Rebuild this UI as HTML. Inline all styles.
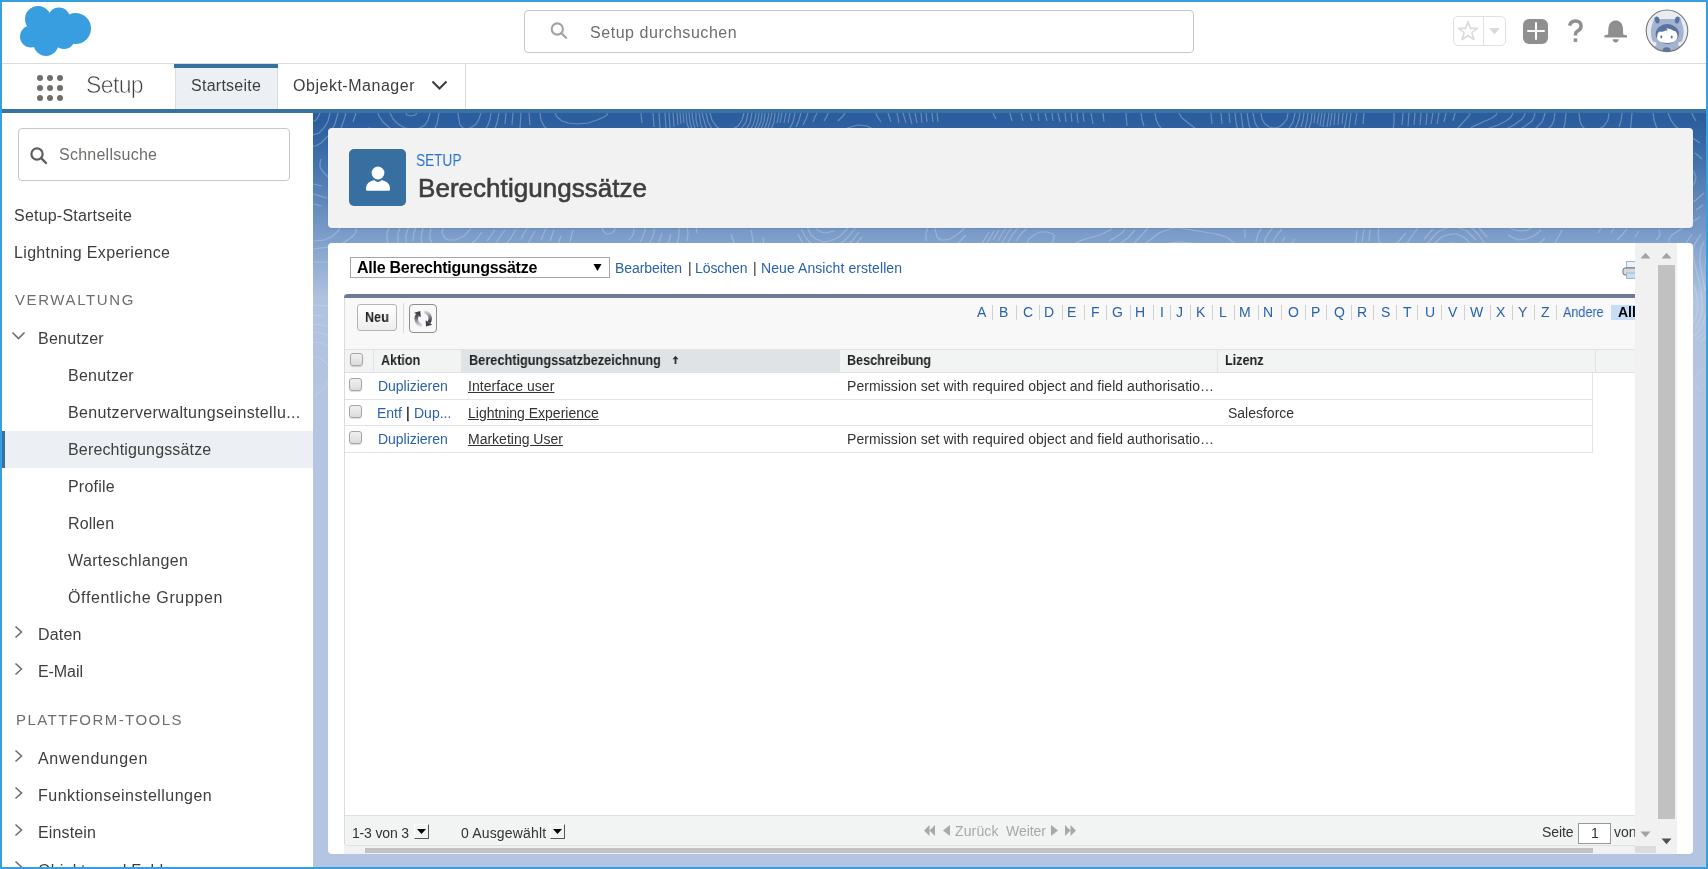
<!DOCTYPE html>
<html><head><meta charset="utf-8"><style>
html,body{margin:0;padding:0;}
body{width:1708px;height:869px;overflow:hidden;position:relative;background:#379fe0;font-family:"Liberation Sans",sans-serif;}
#pg{position:absolute;left:0;top:0;width:1708px;height:869px;overflow:hidden;}
#pg div, #pg svg{position:absolute;}
.t{white-space:nowrap;line-height:normal;will-change:transform;}
</style></head><body><div id="pg">
<div style="left:2px;top:2px;width:1704px;height:61px;background:#fff"></div>
<div style="left:2px;top:63px;width:1704px;height:1px;background:#dddbda"></div>
<svg style="position:absolute;left:19px;top:5px" width="75" height="53" viewBox="0 0 75 53">
<g fill="#389edf">
<circle cx="19" cy="14" r="13"/><circle cx="40" cy="13.5" r="11"/><circle cx="56.5" cy="23.5" r="15.5"/>
<circle cx="12" cy="31.5" r="11"/><circle cx="27" cy="38.5" r="12.5"/><circle cx="45" cy="33" r="11"/>
<rect x="14" y="16" width="44" height="22"/>
</g></svg>
<div style="left:524px;top:10px;width:668px;height:41px;border:1px solid #c9c7c5;border-radius:4px;background:#fff"></div>
<svg style="position:absolute;left:549px;top:21px" width="22" height="20" viewBox="0 0 22 20">
<circle cx="8.3" cy="8" r="5.6" fill="none" stroke="#a5a3a0" stroke-width="2.1"/>
<line x1="12.5" y1="12.2" x2="17" y2="16.7" stroke="#a5a3a0" stroke-width="2.3" stroke-linecap="round"/></svg>
<div class="t" style="left:590px;top:24px;font-size:16px;color:#706e6b;letter-spacing:0.55px;">Setup durchsuchen</div>
<div style="left:1453px;top:16px;width:51px;height:28px;border:1px solid #e1e1e1;border-radius:5px;background:#fff"></div>
<div style="left:1483px;top:17px;width:1px;height:28px;background:#e1e1e1"></div>
<svg style="position:absolute;left:1455px;top:19px" width="26" height="24" viewBox="0 0 26 24">
<path d="M13 2.6 L15.4 9.3 L22.4 9.4 L16.9 13.7 L18.9 20.5 L13 16.5 L7.1 20.5 L9.1 13.7 L3.6 9.4 L10.6 9.3 Z" fill="none" stroke="#dcdcdc" stroke-width="1.7" stroke-linejoin="round"/></svg>
<svg style="position:absolute;left:1488px;top:27px" width="13" height="9" viewBox="0 0 13 9"><path d="M1 1 H12 L6.5 7.5 Z" fill="#dadada"/></svg>
<div style="left:1523px;top:19px;width:25px;height:25px;background:#8f8f8f;border-radius:6px"></div>
<div style="left:1527px;top:30px;width:18px;height:2.4px;background:#fff;border-radius:1.2px"></div>
<div style="left:1534.8px;top:22px;width:2.4px;height:18px;background:#fff;border-radius:1.2px"></div>
<svg style="position:absolute;left:1566px;top:19px" width="20" height="26" viewBox="0 0 20 26">
<path d="M3.6 6.6 C4.3 3.6 6.6 1.9 9.5 1.9 C12.8 1.9 15.1 4.1 15.1 7.1 C15.1 10.1 13 11.5 11.2 12.3 C10 12.9 9.5 13.6 9.5 15 V16.6" fill="none" stroke="#8f8f8f" stroke-width="3.5"/>
<rect x="7.7" y="19.4" width="3.5" height="3.5" fill="#8f8f8f"/></svg>
<svg style="position:absolute;left:1603px;top:19px" width="26" height="26" viewBox="0 0 26 26">
<path d="M5.2 15.5 C5.2 10 5.3 5.5 8 3.3 C9.6 1.9 11.2 1.5 12.7 1.5 C14.2 1.5 15.8 1.9 17.4 3.3 C20.1 5.5 20.2 10 20.2 15.5 L23.5 16.2 C24.3 16.4 24.3 18.6 23.5 18.6 L1.9 18.6 C1.1 18.6 1.1 16.4 1.9 16.2 Z" fill="#8f8f8f"/>
<path d="M9.6 20.3 H15.8 C15.6 22.3 14.4 23.4 12.7 23.4 C11 23.4 9.8 22.3 9.6 20.3 Z" fill="#8f8f8f"/></svg>
<svg style="position:absolute;left:1645px;top:9px" width="44" height="44" viewBox="0 0 44 44">
<defs><clipPath id="av"><circle cx="22" cy="21.8" r="20.6"/></clipPath></defs>
<circle cx="22" cy="21.8" r="20.8" fill="#e8ecf1"/>
<g clip-path="url(#av)">
<path d="M9.5 8 C12 8.5 13.5 9.8 15 10 L29.5 10 C31 9.8 32.5 8.5 35 8 C36 11 36.5 13 37.5 16 C39 20 39 27 37 32 L34.5 35 L37 46 L7.5 46 L10 35 L7.5 32 C5.5 27 5.5 20 7 16 C8 13 8.5 11 9.5 8 Z" fill="#a3b3d0"/>
<path d="M2 30.8 L11.3 33.6 L11.3 36.9 L2 36.3 Z" fill="#e8ecf1"/>
<path d="M42.6 30.8 L33.3 33.6 L33.3 36.9 L42.6 36.3 Z" fill="#e8ecf1"/>
<ellipse cx="12.2" cy="11" rx="2.3" ry="3.5" fill="#5a73a0" transform="rotate(-12 12.2 11)"/>
<ellipse cx="32.2" cy="11" rx="2.3" ry="3.5" fill="#5a73a0" transform="rotate(12 32.2 11)"/>
<ellipse cx="22.3" cy="25" rx="11.6" ry="9.9" fill="#5a73a0"/>
<path d="M12.1 29 C12.1 26 12.8 24 14.2 22.6 C16 23.2 18.5 22.8 20.5 21.5 C21.3 21.6 22 21.8 22.6 21.5 C22.3 20.6 21.8 19.8 21 19.2 C24.5 19.6 27.5 20.8 29 22 L30.5 22.3 C31.6 23.5 32.3 25 32.5 27 C32.5 31.5 28.8 33.9 22.3 33.9 C15.8 33.9 12.1 32 12.1 29 Z" fill="#fff"/>
<ellipse cx="16.3" cy="27.8" rx="1" ry="1.6" fill="#5a73a0"/><ellipse cx="26.7" cy="28" rx="1" ry="1.6" fill="#5a73a0"/>
<ellipse cx="21.6" cy="42.3" rx="4.1" ry="4" fill="#5a73a0"/>
</g>
<circle cx="22" cy="21.8" r="20.8" fill="none" stroke="#777" stroke-width="1.1"/>
</svg>
<div style="left:2px;top:64px;width:1704px;height:45px;background:#fff"></div>
<div style="left:37px;top:75px;width:6px;height:6px;border-radius:50%;background:#706e6b"></div>
<div style="left:47px;top:75px;width:6px;height:6px;border-radius:50%;background:#706e6b"></div>
<div style="left:57px;top:75px;width:6px;height:6px;border-radius:50%;background:#706e6b"></div>
<div style="left:37px;top:85px;width:6px;height:6px;border-radius:50%;background:#706e6b"></div>
<div style="left:47px;top:85px;width:6px;height:6px;border-radius:50%;background:#706e6b"></div>
<div style="left:57px;top:85px;width:6px;height:6px;border-radius:50%;background:#706e6b"></div>
<div style="left:37px;top:95px;width:6px;height:6px;border-radius:50%;background:#706e6b"></div>
<div style="left:47px;top:95px;width:6px;height:6px;border-radius:50%;background:#706e6b"></div>
<div style="left:57px;top:95px;width:6px;height:6px;border-radius:50%;background:#706e6b"></div>
<div class="t" style="left:86px;top:72px;font-size:23px;color:#3e3e3c;letter-spacing:-0.61px;-webkit-text-stroke:0.6px #fff;">Setup</div>
<div style="left:174px;top:64px;width:104px;height:4px;background:#3372a0"></div>
<div style="left:175px;top:68px;width:103px;height:41px;background:#ecf0f4;border-left:1px solid #dddbda;border-right:1px solid #dddbda;box-sizing:border-box"></div>
<div class="t" style="left:191px;top:77px;font-size:16px;color:#3e3e3c;letter-spacing:0.26px;">Startseite</div>
<div class="t" style="left:293px;top:77px;font-size:16px;color:#3e3e3c;letter-spacing:0.52px;">Objekt-Manager</div>
<svg style="position:absolute;left:430px;top:79px" width="19" height="13" viewBox="0 0 19 13"><path d="M2.5 2.5 L9.5 9.5 L16.5 2.5" fill="none" stroke="#3e3e3c" stroke-width="2.1"/></svg>
<div style="left:465px;top:64px;width:1px;height:45px;background:#dddbda"></div>
<div style="left:2px;top:109px;width:1704px;height:4px;background:#3673a2"></div>
<div style="left:2px;top:113px;width:311px;height:754px;background:#fff"></div>
<div style="left:18px;top:128px;width:270px;height:51px;border:1px solid #c9c7c5;border-radius:4px;background:#fff"></div>
<svg style="position:absolute;left:28px;top:145px" width="22" height="22" viewBox="0 0 22 22">
<circle cx="9" cy="9" r="5.6" fill="none" stroke="#5f5e5c" stroke-width="2.2"/>
<line x1="13.2" y1="13.2" x2="18" y2="18" stroke="#5f5e5c" stroke-width="2.4" stroke-linecap="round"/></svg>
<div class="t" style="left:59px;top:146px;font-size:16px;color:#706e6b;letter-spacing:0.25px;">Schnellsuche</div>
<div class="t" style="left:14px;top:207px;font-size:16px;color:#3e3e3c;letter-spacing:0.21px;">Setup-Startseite</div>
<div class="t" style="left:14px;top:244px;font-size:16px;color:#3e3e3c;letter-spacing:0.34px;">Lightning Experience</div>
<div class="t" style="left:15px;top:291px;font-size:15px;color:#706e6b;letter-spacing:1.60px;">VERWALTUNG</div>
<svg style="position:absolute;left:11px;top:331px" width="16" height="10" viewBox="0 0 16 10"><path d="M1.5 1.5 L7.5 7.5 L13.5 1.5" fill="none" stroke="#706e6b" stroke-width="1.6"/></svg>
<div class="t" style="left:38px;top:330px;font-size:16px;color:#3e3e3c;letter-spacing:0.22px;">Benutzer</div>
<div style="left:2px;top:431px;width:311px;height:37px;background:#ecf0f4"></div>
<div style="left:2px;top:431px;width:3px;height:37px;background:#3670a0"></div>
<div class="t" style="left:68px;top:367px;font-size:16px;color:#3e3e3c;letter-spacing:0.22px;">Benutzer</div>
<div class="t" style="left:68px;top:404px;font-size:16px;color:#3e3e3c;letter-spacing:0.36px;">Benutzerverwaltungseinstellu...</div>
<div class="t" style="left:68px;top:441px;font-size:16px;color:#3e3e3c;letter-spacing:0.16px;">Berechtigungssätze</div>
<div class="t" style="left:68px;top:478px;font-size:16px;color:#3e3e3c;letter-spacing:0.20px;">Profile</div>
<div class="t" style="left:68px;top:515px;font-size:16px;color:#3e3e3c;letter-spacing:0.14px;">Rollen</div>
<div class="t" style="left:68px;top:552px;font-size:16px;color:#3e3e3c;letter-spacing:0.38px;">Warteschlangen</div>
<div class="t" style="left:68px;top:589px;font-size:16px;color:#3e3e3c;letter-spacing:0.64px;">Öffentliche Gruppen</div>
<svg style="position:absolute;left:14px;top:625px" width="10" height="14" viewBox="0 0 10 14"><path d="M1.5 1.5 L7.5 7 L1.5 12.5" fill="none" stroke="#706e6b" stroke-width="1.6"/></svg>
<div class="t" style="left:38px;top:626px;font-size:16px;color:#3e3e3c;letter-spacing:0.19px;">Daten</div>
<svg style="position:absolute;left:14px;top:662px" width="10" height="14" viewBox="0 0 10 14"><path d="M1.5 1.5 L7.5 7 L1.5 12.5" fill="none" stroke="#706e6b" stroke-width="1.6"/></svg>
<div class="t" style="left:38px;top:663px;font-size:16px;color:#3e3e3c;letter-spacing:-0.07px;">E-Mail</div>
<div class="t" style="left:16px;top:711px;font-size:15px;color:#706e6b;letter-spacing:1.44px;">PLATTFORM-TOOLS</div>
<svg style="position:absolute;left:14px;top:749px" width="10" height="14" viewBox="0 0 10 14"><path d="M1.5 1.5 L7.5 7 L1.5 12.5" fill="none" stroke="#706e6b" stroke-width="1.6"/></svg>
<div class="t" style="left:38px;top:750px;font-size:16px;color:#3e3e3c;letter-spacing:0.70px;">Anwendungen</div>
<svg style="position:absolute;left:14px;top:786px" width="10" height="14" viewBox="0 0 10 14"><path d="M1.5 1.5 L7.5 7 L1.5 12.5" fill="none" stroke="#706e6b" stroke-width="1.6"/></svg>
<div class="t" style="left:38px;top:787px;font-size:16px;color:#3e3e3c;letter-spacing:0.48px;">Funktionseinstellungen</div>
<svg style="position:absolute;left:14px;top:823px" width="10" height="14" viewBox="0 0 10 14"><path d="M1.5 1.5 L7.5 7 L1.5 12.5" fill="none" stroke="#706e6b" stroke-width="1.6"/></svg>
<div class="t" style="left:38px;top:824px;font-size:16px;color:#3e3e3c;letter-spacing:0.15px;">Einstein</div>
<svg style="position:absolute;left:14px;top:860px" width="10" height="14" viewBox="0 0 10 14"><path d="M1.5 1.5 L7.5 7 L1.5 12.5" fill="none" stroke="#706e6b" stroke-width="1.6"/></svg>
<div class="t" style="left:38px;top:862px;font-size:16px;color:#3e3e3c;letter-spacing:0.22px;">Objekte und Felder</div>
<div style="left:313px;top:113px;width:1393px;height:754px;background:linear-gradient(to bottom,#2c5e9f 0px,#2c5e9f 8px,#3568a5 30px,#4676ae 55px,#668cbf 95px,#7c9dca 123px,#96b0d6 155px,#afc2df 185px,#b3c5e1 275px,#b3c5e1 755px)"></div>
<svg style="position:absolute;left:313px;top:113px" width="1393" height="360" viewBox="0 0 1393 360">
<defs><linearGradient id="pf" x1="0" y1="0" x2="0" y2="360" gradientUnits="userSpaceOnUse"><stop offset="0" stop-color="#fff" stop-opacity="0.28"/><stop offset="0.45" stop-color="#fff" stop-opacity="0.22"/><stop offset="1" stop-color="#fff" stop-opacity="0"/></linearGradient></defs>
<path d="M397 0 L399 7 L403 13 L408 17 L414 18 L420 16 L425 13 L429 7 L431 0 M393 0 L395 9 L399 16 M428 16 L433 9 L435 0 M389 0 L392 11 L394 16 M431 19 L434 15 L437 10 L439 0 M386 0 L388 12 L391 18 M437 17 L440 12 L442 6 L443 0 M383 0 L383 7 L385 14 M440 19 L443 13 L445 7 L446 0 M379 0 L380 8 L382 15 M445 15 L448 8 L449 0 M376 0 L377 9 L379 17 M448 16 L451 8 L452 0 M683 6 L680 0 M373 0 L374 10 L377 19 M451 17 L454 9 L456 0 M699 8 L697 0 M370 0 L371 10 M454 18 L457 9 L459 0 M710 8 L708 0 M948 0 L949 6 L952 11 L956 14 L961 15 L966 14 L970 11 L974 6 L975 0 M1266 0 L1267 8 L1269 13 L1273 17 L1279 18 L1286 16 L1291 13 L1295 7 L1296 0 M367 0 L368 11 M457 19 L461 9 L462 0 M635 112 L638 113 M719 8 L717 0 M940 0 L942 10 L947 18 M975 17 L980 9 L982 0 M1253 0 L1252 10 L1250 18 M1306 14 L1308 8 L1309 0 M364 0 L365 12 M464 10 L466 0 M624 0 L625 9 M622 115 L623 120 L624 124 L627 127 L631 127 L637 126 L645 121 L654 113 M726 8 L725 0 M934 0 L936 12 L938 18 M981 18 L984 12 L986 6 L987 0 M1242 0 L1241 7 L1239 12 L1235 16 M1317 19 L1318 11 L1319 0 M360 0 L361 14 M467 10 L469 0 M619 0 L620 9 M615 112 L613 121 L613 128 M643 132 L653 122 M734 8 L732 0 M928 0 L929 8 L930 15 M988 14 L990 7 L991 0 M1232 0 L1231 4 L1229 9 L1225 13 L1222 16 M1379 74 L1382 69 L1383 64 L1381 59 L1377 54 M1392 357 L1389 359 M356 0 L357 15 M471 10 L473 0 M613 0 L614 9 M740 8 L739 0 M922 0 L923 9 L925 18 M992 16 L994 8 L995 0 M1222 0 L1221 4 L1219 8 L1211 14 L1201 19 M1378 90 L1383 87 L1391 80 M1389 46 L1382 40 M1346 19 L1343 13 L1341 7 L1340 0 M1386 343 L1379 344 M352 0 L353 16 M475 10 L477 0 M608 0 L609 10 M747 9 L745 0 M916 0 L917 10 M995 18 L998 9 L999 0 M1212 0 L1211 3 L1209 6 L1201 12 L1193 16 M1383 97 L1390 92 M1387 30 L1369 18 L1362 13 L1358 7 L1355 0 M142 127 L147 125 L151 123 L155 119 L158 115 M131 113 L129 119 L131 124 L133 126 L136 127 L142 127 M346 0 L347 15 M418 121 L421 130 M439 132 L440 127 L438 117 M475 19 L480 9 L482 0 M602 0 L604 10 M753 9 L752 0 M908 0 L909 11 M1001 10 L1002 0 M1200 0 L1198 4 L1193 8 L1185 12 L1168 18 M1346 116 L1347 122 L1346 124 L1343 127 M1377 205 L1379 200 L1380 189 L1377 177 M1356 130 L1356 126 L1359 122 L1387 104 M1383 8 L1380 3 L1379 0 M155 133 L163 127 L169 119 M118 115 L117 121 L117 126 L119 130 M340 0 L341 14 M451 133 L450 124 M483 14 L486 7 L488 0 M596 0 L599 11 M668 132 L676 119 M759 9 L758 0 M898 0 L899 11 M1004 11 L1006 0 M1184 0 L1183 2 L1179 5 L1161 13 L1153 18 M1195 114 L1202 117 L1208 118 L1215 117 L1223 112 M1326 118 L1322 124 M1379 212 L1383 204 L1385 194 L1384 183 L1381 172 M1372 134 L1375 127 L1379 121 M174 128 L182 117 M111 112 L109 119 L108 126 L110 133 M242 0 L244 4 L249 8 L255 10 L264 11 L275 10 L284 7 L291 4 L294 2 L294 0 M328 0 L329 10 M590 0 L593 10 M490 12 L493 6 L495 0 M903 133 L891 131 L864 129 L856 130 L849 132 M674 130 L681 118 M765 10 L764 0 M866 0 L867 2 L869 5 L883 16 M1007 13 L1009 0 M1157 0 L1156 3 L1144 16 M1195 122 L1201 125 L1206 127 L1213 126 L1221 123 L1228 117 M1314 115 L1310 121 L1304 127 M1382 216 L1386 209 L1389 199 L1389 188 L1388 176 L1381 148 L1380 140 L1381 133 L1384 127 L1388 121 M182 131 L192 117 M104 112 L101 120 L100 128 M227 0 L228 7 L231 13 L235 17 M383 113 L384 120 M584 0 L586 10 M500 9 L502 4 L504 0 M924 133 L920 129 L915 125 L910 123 L903 121 L866 115 L860 115 L854 117 L846 120 L828 134 M680 127 L686 117 M771 9 L770 0 M842 0 L843 6 L845 11 L848 15 M1010 14 L1012 0 M1142 0 L1140 8 M1066 113 L1065 121 L1066 128 L1069 132 L1072 133 L1076 133 L1080 132 L1085 129 L1093 120 M1226 131 L1232 125 M1302 113 L1298 120 M191 134 L198 125 L203 116 M96 113 L93 122 L93 127 L94 132 M1380 224 L1386 218 L1390 211 L1393 201 M1392 178 L1387 150 L1387 142 L1388 135 L1391 129 M3 360 L0 359 M0 8 L2 8 L4 6 L6 2 L7 0 M216 0 L217 12 M374 113 L375 120 L374 128 M575 0 L578 9 M511 8 L514 3 L515 0 M828 0 L829 7 L831 13 M835 115 L828 123 L821 130 M685 128 L690 119 L695 112 M780 11 L778 0 M932 125 L932 120 L932 116 M1014 14 L1016 0 M1133 0 L1131 9 M1057 117 L1056 128 M1092 133 L1107 112 M1241 132 L1249 117 M1289 114 L1285 120 M208 126 L214 115 M87 115 L85 120 L85 125 L85 130 M1383 227 L1389 221 M1393 152 L1393 144 M0 128 L11 127 L20 123 L25 118 L27 115 L27 112 M9 93 L0 91 M0 284 L2 283 L6 280 L12 274 L16 267 L17 261 L16 255 L12 249 L7 245 L0 243 M15 352 L11 344 L4 326 L2 323 L0 321 M0 22 L6 20 L11 15 L15 8 L17 0 M208 0 L207 15 M78 112 L75 117 L74 121 L74 126 L75 131 M213 134 L222 118 M366 112 L366 123 L363 134 M563 0 L564 3 L568 9 M525 8 L530 3 L532 0 M813 0 L814 13 M822 117 L815 125 L806 131 M689 130 L694 121 L700 113 M791 9 L790 0 M943 129 L945 121 L949 114 M1017 13 L1019 0 M1126 0 L1124 11 M1051 116 L1049 129 M1166 115 L1174 124 M0 136 L16 134 L30 130 L36 126 L40 123 L43 119 L43 115 M14 85 L7 83 L0 81 M1392 305 L1380 301 M1388 229 L1393 223 M17 234 L9 230 L0 229 M0 33 L3 33 L8 30 L16 22 L22 11 L25 0 M93 0 L94 2 L98 3 L102 2 L104 0 M200 0 L199 12 M9 73 L0 71 M951 134 L952 126 L957 118 L962 112 M1021 12 L1022 0 M1120 0 L1118 11 M1044 118 L1042 134 M1111 126 L1120 116 M1155 112 L1160 116 L1165 121 L1172 131 M534 15 L545 12 L554 13 L562 17 M228 127 L233 115 M358 121 L355 131 M694 132 L699 122 L706 114 M812 116 L809 120 L803 124 L796 128 M51 134 L57 134 M17 223 L9 220 L0 219 M193 0 L192 11 M16 65 L10 59 L7 54 L7 50 L8 46 M28 15 L31 7 L33 0 M77 0 L80 6 L85 11 L92 15 L100 16 L107 15 L112 12 L115 7 L117 0 M960 129 L964 122 L969 116 M1025 12 L1026 0 M1114 0 L1113 12 M1115 130 L1120 124 L1125 119 L1131 116 L1137 114 L1143 114 L1149 116 L1154 118 L1158 122 L1163 127 M549 124 L542 132 M237 128 L241 117 M349 120 L346 129 M703 128 L708 121 L714 115 M802 112 L797 117 L787 122 L769 127 L761 131 M1383 292 L1378 289 M0 149 L16 149 M18 214 L9 212 L0 211 M186 0 L184 10 L181 18 M40 9 L43 0 M65 0 L66 3 L70 9 L79 17 M120 19 L124 11 L126 0 M1108 0 L1107 12 M969 129 L972 124 M1029 11 L1030 0 M490 131 L485 121 M546 119 L539 128 L533 133 M244 134 L248 123 M341 113 L341 120 L339 125 L336 131 M1388 287 L1379 283 M713 132 L716 126 L721 122 L727 119 L734 119 L740 121 L741 123 L741 125 L739 130 M1119 134 L1124 128 L1129 124 L1134 122 L1139 121 L1144 121 L1148 123 L1152 125 L1156 129 L1159 134 M10 203 L0 202 M178 0 L177 6 L175 12 L172 17 M1102 0 L1101 12 M979 130 L982 126 M1031 17 L1033 8 L1034 0 M47 18 L51 16 L56 15 L62 16 M499 132 L493 125 L488 116 M543 114 L536 123 L531 128 L525 132 M257 129 L260 117 M332 112 L332 118 L330 123 L327 129 M1388 278 L1384 275 L1382 271 L1382 266 L1385 261 L1391 256 M1133 131 L1137 130 L1140 130 L1145 131 M18 193 L0 192 M168 0 L166 6 L163 11 L159 14 L154 16 L150 15 L147 12 L146 7 L145 0 M1096 0 L1095 13 M1036 15 L1038 0 M517 128 L510 129 L503 126 L498 122 L494 114 M535 115 L526 124 L522 126 L517 128 M321 112 L321 117 L320 122 L316 127 M1090 0 L1089 12 M1042 12 L1044 0 M513 120 L508 119 L503 116 M521 118 L517 119 L513 120 M296 121 L294 121 L292 120 L290 118 L289 115 L290 112 M303 114 L301 118 L299 120 L296 121 M1081 0 L1081 10 L1080 18 M1050 11 L1051 0" fill="none" stroke="url(#pf)" stroke-width="1.2"/></svg>
<div style="left:328px;top:128px;width:1365px;height:100px;background:#f2f2f2;border-radius:4px;box-shadow:0 1px 2px rgba(0,0,0,0.10)"></div>
<div style="left:349px;top:149px;width:57px;height:57px;background:#376fa0;border-radius:5px"></div>
<svg style="position:absolute;left:360px;top:160px" width="36" height="36" viewBox="0 0 36 36">
<circle cx="18" cy="13" r="6.4" fill="#fff"/>
<path d="M6 29 C6 25 7.5 22.8 11 21.2 C12.6 20.5 13.5 20.2 14.3 20 C15.3 21.3 16.6 22 18 22 C19.4 22 20.7 21.3 21.7 20 C22.5 20.2 23.4 20.5 25 21.2 C28.5 22.8 30 25 30 29 C30 30.3 29.6 30.8 28.5 30.8 H7.5 C6.4 30.8 6 30.3 6 29 Z" fill="#fff"/></svg>
<div class="t" style="left:416px;top:152px;font-size:16px;color:#2a73d0;transform:scaleX(0.8527);transform-origin:0 0;">SETUP</div>
<div class="t" style="left:418px;top:173px;font-size:26px;color:#3e3e3c;letter-spacing:0.04px;-webkit-text-stroke:0.6px #3e3e3c;">Berechtigungssätze</div>
<div style="left:328px;top:243px;width:1365px;height:611px;background:#fff;border-radius:4px"></div>
<div style="left:350px;top:257px;width:258px;height:19px;border:1px solid #a6a6a6;background:#fff"></div>
<div class="t" style="left:357px;top:259px;font-size:16px;color:#000;font-weight:bold;letter-spacing:-0.25px;">Alle Berechtigungssätze</div>
<svg style="position:absolute;left:593px;top:263px" width="9" height="9" viewBox="0 0 9 9"><path d="M0.5 1 H8.5 L4.5 8 Z" fill="#000"/></svg>
<div class="t" style="left:615px;top:260px;font-size:14px;color:#2a62ad;letter-spacing:-0.08px;">Bearbeiten</div>
<div class="t" style="left:688px;top:260px;font-size:14px;color:#333;">|</div>
<div class="t" style="left:695px;top:260px;font-size:14px;color:#2a62ad;letter-spacing:-0.07px;">Löschen</div>
<div class="t" style="left:753px;top:260px;font-size:14px;color:#333;">|</div>
<div class="t" style="left:761px;top:260px;font-size:14px;color:#2a62ad;letter-spacing:0.08px;">Neue Ansicht erstellen</div>
<svg style="position:absolute;left:1622px;top:259px" width="20" height="22" viewBox="0 0 20 22">
<rect x="4.5" y="2.5" width="11" height="6" fill="#e8f4fb" stroke="#aab4c0"/>
<rect x="1" y="9" width="18" height="7" rx="2" fill="#d5dadf" stroke="#6d7278"/>
<rect x="4.5" y="14" width="11" height="5.5" fill="#bfe3f5" stroke="#aab4c0"/></svg>
<div style="left:344px;top:294px;width:1291px;height:551px;background:#fff;border-left:1px solid #dcdcdc;box-sizing:border-box"></div>
<div style="left:344px;top:294px;width:1291px;height:4px;background:#6f7b96;border-radius:4px 0 0 0"></div>
<div style="left:345px;top:298px;width:1290px;height:51px;background:#f8f8f8"></div>
<div style="left:357px;top:304px;width:40px;height:27px;border:1px solid #b5b5b5;border-radius:3px;background:linear-gradient(#fff,#ededed);box-sizing:border-box"></div>
<div class="t" style="left:365px;top:309px;font-size:14px;color:#222;font-weight:bold;transform:scaleX(0.9);transform-origin:0 0;">Neu</div>
<div style="left:403px;top:303px;width:1px;height:30px;background:#dadada"></div>
<div style="left:409px;top:304px;width:28px;height:29px;border:1px solid #8e8e8e;border-radius:4px;background:#f8f8f8;box-sizing:border-box"></div>
<svg style="position:absolute;left:413px;top:308px" width="20" height="20" viewBox="0 0 20 20">
<defs><linearGradient id="rgL" gradientUnits="userSpaceOnUse" x1="0" y1="7" x2="0" y2="19"><stop offset="0" stop-color="#3f3f4a"/><stop offset="1" stop-color="#3f3f4a" stop-opacity="0.05"/></linearGradient>
<linearGradient id="rgR" gradientUnits="userSpaceOnUse" x1="0" y1="2" x2="0" y2="13"><stop offset="0" stop-color="#3f3f4a" stop-opacity="0.05"/><stop offset="1" stop-color="#3f3f4a"/></linearGradient></defs>
<path d="M8.98 17.89 A7 7 0 0 1 4.47 6.98" fill="none" stroke="url(#rgL)" stroke-width="3.4"/>
<path d="M7.34 2.88 L1.19 4.68 L7.75 9.28 Z" fill="#3f3f4a"/>
<path d="M11.42 3.61 A7 7 0 0 1 15.93 14.52" fill="none" stroke="url(#rgR)" stroke-width="3.4"/>
<path d="M13.06 18.62 L19.21 16.82 L12.65 12.22 Z" fill="#3f3f4a"/></svg>
<div style="left:992px;top:305px;width:1px;height:15px;background:#d0d0d0"></div>
<div style="left:1016px;top:305px;width:1px;height:15px;background:#d0d0d0"></div>
<div style="left:1039px;top:305px;width:1px;height:15px;background:#d0d0d0"></div>
<div style="left:1062px;top:305px;width:1px;height:15px;background:#d0d0d0"></div>
<div style="left:1084px;top:305px;width:1px;height:15px;background:#d0d0d0"></div>
<div style="left:1106px;top:305px;width:1px;height:15px;background:#d0d0d0"></div>
<div style="left:1130px;top:305px;width:1px;height:15px;background:#d0d0d0"></div>
<div style="left:1153px;top:305px;width:1px;height:15px;background:#d0d0d0"></div>
<div style="left:1170px;top:305px;width:1px;height:15px;background:#d0d0d0"></div>
<div style="left:1190px;top:305px;width:1px;height:15px;background:#d0d0d0"></div>
<div style="left:1212px;top:305px;width:1px;height:15px;background:#d0d0d0"></div>
<div style="left:1234px;top:305px;width:1px;height:15px;background:#d0d0d0"></div>
<div style="left:1258px;top:305px;width:1px;height:15px;background:#d0d0d0"></div>
<div style="left:1281px;top:305px;width:1px;height:15px;background:#d0d0d0"></div>
<div style="left:1305px;top:305px;width:1px;height:15px;background:#d0d0d0"></div>
<div style="left:1326px;top:305px;width:1px;height:15px;background:#d0d0d0"></div>
<div style="left:1351px;top:305px;width:1px;height:15px;background:#d0d0d0"></div>
<div style="left:1373px;top:305px;width:1px;height:15px;background:#d0d0d0"></div>
<div style="left:1396px;top:305px;width:1px;height:15px;background:#d0d0d0"></div>
<div style="left:1417px;top:305px;width:1px;height:15px;background:#d0d0d0"></div>
<div style="left:1441px;top:305px;width:1px;height:15px;background:#d0d0d0"></div>
<div style="left:1464px;top:305px;width:1px;height:15px;background:#d0d0d0"></div>
<div style="left:1490px;top:305px;width:1px;height:15px;background:#d0d0d0"></div>
<div style="left:1512px;top:305px;width:1px;height:15px;background:#d0d0d0"></div>
<div style="left:1534px;top:305px;width:1px;height:15px;background:#d0d0d0"></div>
<div style="left:1556px;top:305px;width:1px;height:15px;background:#d0d0d0"></div>
<div class="t" style="left:977px;top:304px;font-size:14px;color:#2a62ad;">A</div>
<div class="t" style="left:999px;top:304px;font-size:14px;color:#2a62ad;">B</div>
<div class="t" style="left:1023px;top:304px;font-size:14px;color:#2a62ad;">C</div>
<div class="t" style="left:1044px;top:304px;font-size:14px;color:#2a62ad;">D</div>
<div class="t" style="left:1067px;top:304px;font-size:14px;color:#2a62ad;">E</div>
<div class="t" style="left:1091px;top:304px;font-size:14px;color:#2a62ad;">F</div>
<div class="t" style="left:1112px;top:304px;font-size:14px;color:#2a62ad;">G</div>
<div class="t" style="left:1135px;top:304px;font-size:14px;color:#2a62ad;">H</div>
<div class="t" style="left:1160px;top:304px;font-size:14px;color:#2a62ad;">I</div>
<div class="t" style="left:1176px;top:304px;font-size:14px;color:#2a62ad;">J</div>
<div class="t" style="left:1196px;top:304px;font-size:14px;color:#2a62ad;">K</div>
<div class="t" style="left:1219px;top:304px;font-size:14px;color:#2a62ad;">L</div>
<div class="t" style="left:1239px;top:304px;font-size:14px;color:#2a62ad;">M</div>
<div class="t" style="left:1263px;top:304px;font-size:14px;color:#2a62ad;">N</div>
<div class="t" style="left:1288px;top:304px;font-size:14px;color:#2a62ad;">O</div>
<div class="t" style="left:1311px;top:304px;font-size:14px;color:#2a62ad;">P</div>
<div class="t" style="left:1334px;top:304px;font-size:14px;color:#2a62ad;">Q</div>
<div class="t" style="left:1357px;top:304px;font-size:14px;color:#2a62ad;">R</div>
<div class="t" style="left:1381px;top:304px;font-size:14px;color:#2a62ad;">S</div>
<div class="t" style="left:1403px;top:304px;font-size:14px;color:#2a62ad;">T</div>
<div class="t" style="left:1425px;top:304px;font-size:14px;color:#2a62ad;">U</div>
<div class="t" style="left:1448px;top:304px;font-size:14px;color:#2a62ad;">V</div>
<div class="t" style="left:1470px;top:304px;font-size:14px;color:#2a62ad;">W</div>
<div class="t" style="left:1496px;top:304px;font-size:14px;color:#2a62ad;">X</div>
<div class="t" style="left:1518px;top:304px;font-size:14px;color:#2a62ad;">Y</div>
<div class="t" style="left:1541px;top:304px;font-size:14px;color:#2a62ad;">Z</div>
<div class="t" style="left:1563px;top:304px;font-size:14px;color:#2a62ad;transform:scaleX(0.9);transform-origin:0 0;">Andere</div>
<div style="left:1611px;top:305px;width:24px;height:15px;background:#c7ddf7;overflow:hidden"></div>
<div class="t" style="left:1618px;top:304px;font-size:14px;color:#000;font-weight:bold;clip-path:inset(0 0 0 0);">All</div>
<div style="left:345px;top:349px;width:1290px;height:24px;background:#f2f3f3;border-top:1px solid #e0e3e5;border-bottom:1px solid #e0e3e5;box-sizing:border-box"></div>
<div style="left:461px;top:350px;width:379px;height:22px;background:#dfe3e6"></div>
<div style="left:373px;top:350px;width:1px;height:22px;background:#e0e3e5"></div>
<div style="left:1217px;top:350px;width:1px;height:22px;background:#e0e3e5"></div>
<div style="left:1595px;top:350px;width:1px;height:22px;background:#e0e3e5"></div>
<div style="left:350px;top:353px;width:13px;height:13px;border:1px solid #a5a5a5;border-radius:3px;background:linear-gradient(#f0f0f0,#dcdcdc);box-sizing:border-box;box-shadow:0 1px 1px rgba(0,0,0,0.15)"></div>
<div class="t" style="left:381px;top:352px;font-size:14px;color:#222;font-weight:bold;transform:scaleX(0.9);transform-origin:0 0;">Aktion</div>
<div class="t" style="left:469px;top:352px;font-size:14px;color:#222;font-weight:bold;transform:scaleX(0.91);transform-origin:0 0;">Berechtigungssatzbezeichnung</div>
<svg style="position:absolute;left:671px;top:355px" width="9" height="10" viewBox="0 0 9 10"><path d="M4.5 0.8 L7.5 4.2 H5.4 V9 H3.6 V4.2 H1.5 Z" fill="#333"/></svg>
<div class="t" style="left:847px;top:352px;font-size:14px;color:#222;font-weight:bold;transform:scaleX(0.9);transform-origin:0 0;">Beschreibung</div>
<div class="t" style="left:1225px;top:352px;font-size:14px;color:#222;font-weight:bold;transform:scaleX(0.9);transform-origin:0 0;">Lizenz</div>
<div style="left:345px;top:399px;width:1248px;height:1px;background:#e3e3e3"></div>
<div style="left:345px;top:425px;width:1248px;height:1px;background:#e3e3e3"></div>
<div style="left:345px;top:452px;width:1248px;height:1px;background:#e3e3e3"></div>
<div style="left:1592px;top:373px;width:1px;height:27px;background:#e3e3e3"></div>
<div style="left:1592px;top:400px;width:1px;height:26px;background:#e3e3e3"></div>
<div style="left:1592px;top:426px;width:1px;height:27px;background:#e3e3e3"></div>
<div style="left:349px;top:378px;width:13px;height:13px;border:1px solid #a5a5a5;border-radius:3px;background:linear-gradient(#f0f0f0,#dcdcdc);box-sizing:border-box;box-shadow:0 1px 1px rgba(0,0,0,0.15)"></div>
<div class="t" style="left:378px;top:378px;font-size:14px;color:#2a62ad;letter-spacing:-0.03px;">Duplizieren</div>
<div class="t" style="left:468px;top:378px;font-size:14px;color:#333;letter-spacing:0.06px;text-decoration:underline;">Interface user</div>
<div class="t" style="left:847px;top:378px;font-size:14px;color:#333;letter-spacing:0.05px;">Permission set with required object and field authorisatio…</div>
<div style="left:349px;top:405px;width:13px;height:13px;border:1px solid #a5a5a5;border-radius:3px;background:linear-gradient(#f0f0f0,#dcdcdc);box-sizing:border-box;box-shadow:0 1px 1px rgba(0,0,0,0.15)"></div>
<div class="t" style="left:377px;top:405px;font-size:14px;color:#2a62ad;">Entf</div>
<div class="t" style="left:406px;top:405px;font-size:14px;color:#111;-webkit-text-stroke:0.3px #111;">|</div>
<div class="t" style="left:414px;top:405px;font-size:14px;color:#2a62ad;">Dup...</div>
<div class="t" style="left:468px;top:405px;font-size:14px;color:#333;text-decoration:underline;">Lightning Experience</div>
<div class="t" style="left:1228px;top:405px;font-size:14px;color:#333;letter-spacing:-0.01px;">Salesforce</div>
<div style="left:349px;top:431px;width:13px;height:13px;border:1px solid #a5a5a5;border-radius:3px;background:linear-gradient(#f0f0f0,#dcdcdc);box-sizing:border-box;box-shadow:0 1px 1px rgba(0,0,0,0.15)"></div>
<div class="t" style="left:378px;top:431px;font-size:14px;color:#2a62ad;letter-spacing:-0.03px;">Duplizieren</div>
<div class="t" style="left:468px;top:431px;font-size:14px;color:#333;text-decoration:underline;">Marketing User</div>
<div class="t" style="left:847px;top:431px;font-size:14px;color:#333;letter-spacing:0.05px;">Permission set with required object and field authorisatio…</div>
<div style="left:345px;top:815px;width:1290px;height:31px;background:#f2f3f3;border-top:1px solid #dfe1e3;border-bottom:1px solid #dfe1e3;box-sizing:border-box"></div>
<div class="t" style="left:352px;top:825px;font-size:14px;color:#333;letter-spacing:-0.17px;">1-3 von 3</div>
<div style="left:414px;top:824px;width:15px;height:15px;background:#f2f3f3;border-left:1px solid #fff;border-top:1px solid #fff;border-right:1px solid #555;border-bottom:1px solid #555;box-sizing:border-box"></div>
<svg style="position:absolute;left:417px;top:829px" width="10" height="6" viewBox="0 0 10 6"><path d="M0 0 H9 L4.5 5 Z" fill="#000"/></svg>
<div class="t" style="left:461px;top:825px;font-size:14px;color:#333;letter-spacing:0.16px;">0 Ausgewählt</div>
<div style="left:550px;top:824px;width:15px;height:15px;background:#f2f3f3;border-left:1px solid #fff;border-top:1px solid #fff;border-right:1px solid #555;border-bottom:1px solid #555;box-sizing:border-box"></div>
<svg style="position:absolute;left:553px;top:829px" width="10" height="6" viewBox="0 0 10 6"><path d="M0 0 H9 L4.5 5 Z" fill="#000"/></svg>
<svg style="position:absolute;left:923px;top:824px" width="160" height="14" viewBox="0 0 160 14">
<path d="M1 6.5 L6.5 1 V12 Z M6.5 6.5 L12 1 V12 Z" fill="#a8a8a8"/>
<path d="M20 6.5 L27 1 V12 Z" fill="#a8a8a8"/>
<path d="M128 1 L135 6.5 L128 12 Z" fill="#a8a8a8"/>
<path d="M142 1 L147.5 6.5 L142 12 Z M147.5 1 L153 6.5 L147.5 12 Z" fill="#a8a8a8"/></svg>
<div class="t" style="left:955px;top:823px;font-size:14px;color:#a8a8a8;letter-spacing:0.13px;">Zurück</div>
<div class="t" style="left:1006px;top:823px;font-size:14px;color:#a8a8a8;letter-spacing:-0.04px;">Weiter</div>
<div class="t" style="left:1542px;top:824px;font-size:14px;color:#333;letter-spacing:-0.08px;">Seite</div>
<div style="left:1578px;top:823px;width:33px;height:21px;border:1px solid #999;background:#fff;box-sizing:border-box"></div>
<div class="t" style="left:1591px;top:825px;font-size:14px;color:#333;">1</div>
<div class="t" style="left:1614px;top:824px;font-size:14px;color:#333;">von</div>
<div style="left:344px;top:846px;width:1291px;height:8px;background:#f1f1f1"></div>
<div style="left:365px;top:848px;width:1228px;height:5px;background:#c1c1c1"></div>
<div style="left:1635px;top:846px;width:21px;height:8px;background:#dcdcdc"></div>
<div style="left:1635px;top:243px;width:42px;height:603px;background:#f1f1f1"></div>
<svg style="position:absolute;left:1640px;top:252px" width="11" height="7" viewBox="0 0 11 7"><path d="M0.5 6.5 L5.5 0.8 L10.5 6.5 Z" fill="#a3a3a3"/></svg>
<svg style="position:absolute;left:1661px;top:252px" width="11" height="7" viewBox="0 0 11 7"><path d="M0.5 6.5 L5.5 0.8 L10.5 6.5 Z" fill="#a3a3a3"/></svg>
<div style="left:1658px;top:265px;width:17px;height:554px;background:#c1c1c1"></div>
<svg style="position:absolute;left:1640px;top:831px" width="11" height="7" viewBox="0 0 11 7"><path d="M0.5 0.5 L5.5 6.2 L10.5 0.5 Z" fill="#a3a3a3"/></svg>
<svg style="position:absolute;left:1661px;top:838px" width="11" height="7" viewBox="0 0 11 7"><path d="M0.5 0.5 L5.5 6.2 L10.5 0.5 Z" fill="#505050"/></svg>
<div style="left:1635px;top:846px;width:42px;height:8px;background:#f1f1f1"></div>
<div style="left:1635px;top:846px;width:21px;height:7px;background:#dcdcdc"></div>
<div style="left:0;top:0;width:1708px;height:2px;background:#379fe0"></div>
<div style="left:0;top:867px;width:1708px;height:2px;background:#379fe0"></div>
<div style="left:0;top:0;width:2px;height:869px;background:#379fe0"></div>
<div style="left:1706px;top:0;width:2px;height:869px;background:#379fe0"></div>
</div></body></html>
